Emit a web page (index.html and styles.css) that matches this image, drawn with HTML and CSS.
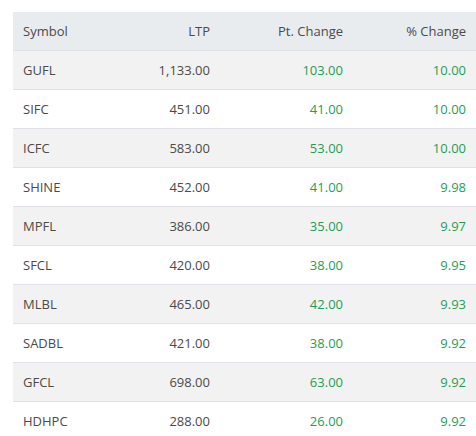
FILE: index.html
```html
<!DOCTYPE html>
<html>
<head>
<meta charset="utf-8">
<link rel="stylesheet" href="styles.css">
</head>
<body>
<table class="market">
  <colgroup>
    <col class="c-sym"><col class="c-ltp"><col class="c-pt"><col class="c-pc">
  </colgroup>
  <thead>
    <tr><th class="left">Symbol</th><th>LTP</th><th>Pt. Change</th><th>% Change</th></tr>
  </thead>
  <tbody>
    <tr><td class="left">GUFL</td><td>1,133.00</td><td class="up">103.00</td><td class="up">10.00</td></tr>
    <tr><td class="left">SIFC</td><td>451.00</td><td class="up">41.00</td><td class="up">10.00</td></tr>
    <tr><td class="left">ICFC</td><td>583.00</td><td class="up">53.00</td><td class="up">10.00</td></tr>
    <tr><td class="left">SHINE</td><td>452.00</td><td class="up">41.00</td><td class="up">9.98</td></tr>
    <tr><td class="left">MPFL</td><td>386.00</td><td class="up">35.00</td><td class="up">9.97</td></tr>
    <tr><td class="left">SFCL</td><td>420.00</td><td class="up">38.00</td><td class="up">9.95</td></tr>
    <tr><td class="left">MLBL</td><td>465.00</td><td class="up">42.00</td><td class="up">9.93</td></tr>
    <tr><td class="left">SADBL</td><td>421.00</td><td class="up">38.00</td><td class="up">9.92</td></tr>
    <tr><td class="left">GFCL</td><td>698.00</td><td class="up">63.00</td><td class="up">9.92</td></tr>
    <tr><td class="left">HDHPC</td><td>288.00</td><td class="up">26.00</td><td class="up">9.92</td></tr>
  </tbody>
</table>
</body>
</html>
```
FILE: styles.css
```css
html, body { margin: 0; padding: 0; background: #fff; }
body { padding: 12px 0 0 13px; }
.market {
  border-collapse: collapse;
  table-layout: fixed;
  width: 463px;
  font-family: "Open Sans", sans-serif;
  font-size: 13px;
  color: #4a4a4a;
}
.c-sym { width: 100px; }
.c-ltp { width: 107px; }
.c-pt { width: 133px; }
.c-pc { width: 123px; }
.market th, .market td {
  height: 38px;
  padding: 0 10px;
  text-align: right;
  font-weight: normal;
  border-bottom: 1px solid #dee2e6;
}
.market th { background: #e9ecef; }
.market tbody tr:nth-child(odd) td { background: #f2f2f2; }
.market .left { text-align: left; }
.market .up { color: #1f9d55; }
```
